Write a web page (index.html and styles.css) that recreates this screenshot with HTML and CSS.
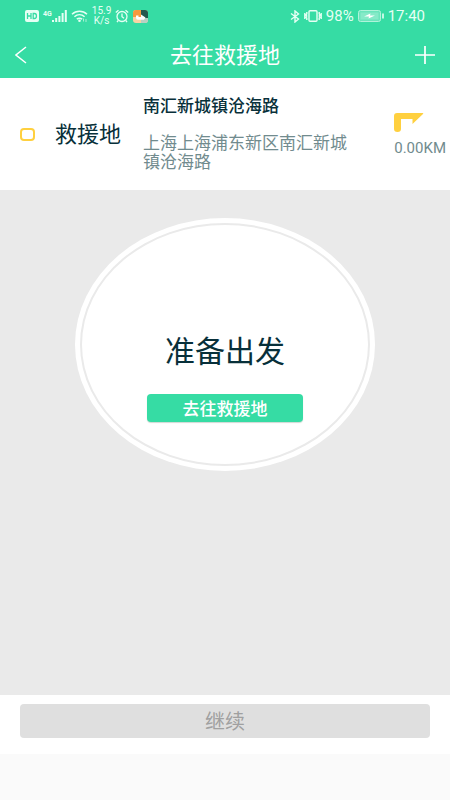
FILE: index.html
```html
<!DOCTYPE html>
<html lang="zh-CN">
<head>
<meta charset="utf-8">
<meta name="viewport" content="width=device-width, initial-scale=1">
<title>去往救援地</title>
<link rel="stylesheet" href="styles.css">
</head>
<body>
<div class="status-bar">
  <div class="status-group">
    <svg width="14" height="12" viewBox="0 0 14 12" aria-hidden="true">
      <rect width="14" height="12" rx="2" fill="#e6fff4"/>
      <path d="M2.5 3v6M6 3v6M2.5 6H6M8.2 3.5v5h1.3c2.6 0 2.6-5 0-5z" fill="none" stroke="#36dca4" stroke-width="1.3"/>
    </svg>
    <div class="signal">
      <span class="signal-type">4G</span>
      <svg width="15" height="12" viewBox="0 0 15 12" aria-hidden="true">
        <path d="M1 10v2M4.2 8v4M7.4 6v6M10.6 3v9M13.8 0v12" stroke="#e6fff4" stroke-width="2"/>
      </svg>
    </div>
    <svg width="17" height="12" viewBox="0 0 17 12" aria-hidden="true">
      <path d="M1 4.2c4.2-4.1 10.8-4.1 15 0M3.4 6.8c3-2.7 7.2-2.7 10.2 0M5.8 9.2c1.7-1.3 3.7-1.3 5.4 0" fill="none" stroke="#e6fff4" stroke-width="1.5"/>
      <circle cx="8.5" cy="10.7" r="1.3" fill="#e6fff4"/>
      <path d="M12.5 8.5v3M15 9v3" stroke="#a8f0d5"/>
    </svg>
    <div class="net-speed"><span>15.9</span><span>K/s</span></div>
    <svg width="14" height="14" viewBox="0 0 14 14" fill="none" stroke="#e6fff4" stroke-width="1.3" aria-hidden="true">
      <circle cx="7" cy="7.5" r="5"/><path d="M7 4.5v3.2l2 1.5M.8 3.6l2.7-2.4M13.2 3.6l-2.7-2.4M3.2 11.500l-1.200 1.600M10.800 11.500l1.200 1.600"/>
    </svg>
    <svg width="15" height="13" viewBox="0 0 15 13" aria-hidden="true">
      <rect width="15" height="13" rx="3" fill="#f9d3a4"/>
      <path d="M3 0h5v7H0V3a3 3 0 0 1 3-3z" fill="#f7993d"/>
      <path d="M8 0h4a3 3 0 0 1 3 3v5H8z" fill="#26594f"/>
      <path d="M8 8h7v2a3 3 0 0 1-3 3H8z" fill="#b9cfc3"/>
      <path d="M3 5.500h2.500V7H8V4.500l4.500 3-1.500 2.300H5q-2 0-2-2z" fill="#fff"/>
    </svg>
  </div>
  <div class="status-group status-right">
    <svg width="10" height="13" viewBox="0 0 10 13" fill="none" stroke="#e6fff4" stroke-width="1.4" aria-hidden="true">
      <path d="M1 3.500l7.500 5.500L5 12V1l3.500 3L1 9.500"/>
    </svg>
    <svg width="18" height="12" viewBox="0 0 18 12" fill="none" stroke="#e6fff4" stroke-width="1.4" aria-hidden="true">
      <rect x="5" y=".7" width="8" height="10.600" rx="1"/>
      <path d="M2.800 2v2l-1 1 1 1-1 1 1 1v2M.8 3v6M15.200 2v2l1 1-1 1 1 1-1 1v2M17.200 3v6"/>
    </svg>
    <span>98%</span>
    <svg width="26" height="12" viewBox="0 0 26 12" aria-hidden="true">
      <rect x=".5" y=".5" width="22" height="11" rx="2" fill="#6be5bc" stroke="#b0f3da"/>
      <rect x="2.500" y="2.500" width="18" height="7" fill="#86eac8"/>
      <path d="M6 6.500l6.500-3-.5 2h5l-6.500 3 .5-2z" fill="#fff"/>
      <path d="M25 3.500v5" stroke="#e6fff4" stroke-width="1.600"/>
    </svg>
    <time>17:40</time>
  </div>
</div>

<header class="nav-bar">
  <button class="icon-button" type="button" aria-label="返回">
    <svg width="12" height="18" viewBox="0 0 12 18" fill="none" stroke="#fff" stroke-width="1.5"><path d="M11 1L1 9l10 8"/></svg>
  </button>
  <h1 class="nav-title">去往救援地</h1>
  <button class="icon-button icon-button-end" type="button" aria-label="添加">
    <svg width="20" height="18" viewBox="0 0 20 18" fill="none" stroke="#fff" stroke-width="1.7"><path d="M0 9h20M10 0v18"/></svg>
  </button>
</header>

<section class="destination">
  <span class="marker"></span>
  <h2 class="destination-label">救援地</h2>
  <div class="address">
    <p class="address-name">南汇新城镇沧海路</p>
    <p class="address-detail">上海上海浦东新区南汇新城镇沧海路</p>
  </div>
  <div class="distance">
    <svg width="30" height="19" viewBox="0 0 30 19" aria-hidden="true">
      <path d="M3 0h25.500q1.500 0 .5 1L18.500 11V6H7v10a3.500 3 0 0 1-7 0V3q0-3 3-3z" fill="#ffd03f"/>
    </svg>
    <span>0.00KM</span>
  </div>
</section>

<main class="stage">
  <div class="dial">
    <div class="dial-face">
      <p class="dial-text">准备出发</p>
      <button class="go-button" type="button">去往救援地</button>
    </div>
  </div>
</main>

<footer class="action-bar">
  <button class="continue-button" type="button" disabled>继续</button>
</footer>
</body>
</html>
```
FILE: styles.css
```css
* {
  box-sizing: border-box;
}

body {
  margin: 0;
  min-height: 100vh;
  display: flex;
  flex-direction: column;
  padding-bottom: 46px;
  background: #fafafa;
  color: #08303a;
  font-family: Roboto, "Noto Sans CJK SC", sans-serif;
}

h1,
h2,
p {
  margin: 0;
  font-weight: 400;
}

button {
  border: 0;
  padding: 0;
  font-family: inherit;
}

svg {
  display: block;
  flex: none;
}

.status-bar {
  display: flex;
  justify-content: space-between;
  align-items: center;
  height: 32px;
  padding: 0 25px;
  background: #36dca4;
  color: #e6fff4;
}

.status-group {
  display: flex;
  align-items: center;
  gap: 4px;
}

.status-right {
  gap: 4px;
  font-size: 15px;
}

.signal {
  display: flex;
  align-items: flex-start;
}

.signal-type {
  font-size: 7px;
  line-height: 8px;
  font-weight: 700;
}

.net-speed {
  display: flex;
  flex-direction: column;
  align-items: center;
  font-size: 10px;
  line-height: 10px;
}

.nav-bar {
  display: grid;
  grid-template-columns: 1fr auto 1fr;
  align-items: center;
  height: 46px;
  padding: 0 15px;
  background: #36dca4;
  color: #fff;
}

.nav-title {
  padding-top: 2px;
  font-size: 22px;
  line-height: 28px;
}

.icon-button {
  justify-self: start;
  background: none;
}

.icon-button-end {
  justify-self: end;
}

.destination {
  display: flex;
  align-items: center;
  height: 112px;
  padding: 0 4px 0 20px;
  background: #fff;
}

.marker {
  flex: none;
  width: 15px;
  height: 13px;
  border: 2px solid #ffd03f;
  border-radius: 4px;
}

.destination-label {
  flex: none;
  margin-left: 20px;
  padding-top: 2px;
  font-size: 22px;
  line-height: 28px;
}

.address {
  flex: 1;
  margin-left: 22px;
  padding-right: 36px;
}

.address-name {
  margin-bottom: 18px;
  font-size: 17px;
  line-height: 19px;
  font-weight: 500;
}

.address-detail {
  font-size: 17px;
  line-height: 19px;
  color: #718b8e;
}

.distance {
  flex: none;
  display: flex;
  flex-direction: column;
  gap: 8px;
  font-size: 15px;
  line-height: 16px;
  color: #718b8e;
}

.stage {
  flex: 1;
  display: flex;
  justify-content: center;
  align-items: flex-start;
  padding: 28px 20px;
  background: #eaeaea;
}

.dial {
  width: 300px;
  height: 253px;
  padding: 5px;
  border-radius: 50%;
  background: #fff;
}

.dial-face {
  display: flex;
  flex-direction: column;
  align-items: center;
  height: 100%;
  padding-top: 109px;
  border: 2px solid #eaeaea;
  border-radius: 50%;
}

.dial-text {
  font-size: 30px;
  line-height: 36px;
}

.go-button {
  width: 156px;
  height: 28px;
  margin-top: 24px;
  padding-top: 2px;
  border-radius: 4px;
  background: #36dca4;
  box-shadow: 0 1px 1px #d0d8d4;
  color: #fff;
  font-size: 17px;
  line-height: 20px;
  font-weight: 500;
}

.action-bar {
  height: 59px;
  padding: 9px 20px;
  background: #fff;
}

.continue-button {
  width: 100%;
  height: 34px;
  padding-top: 2px;
  border-radius: 4px;
  background: #dfdfdf;
  color: #a0a0a0;
  font-size: 20px;
  line-height: 24px;
}
```
